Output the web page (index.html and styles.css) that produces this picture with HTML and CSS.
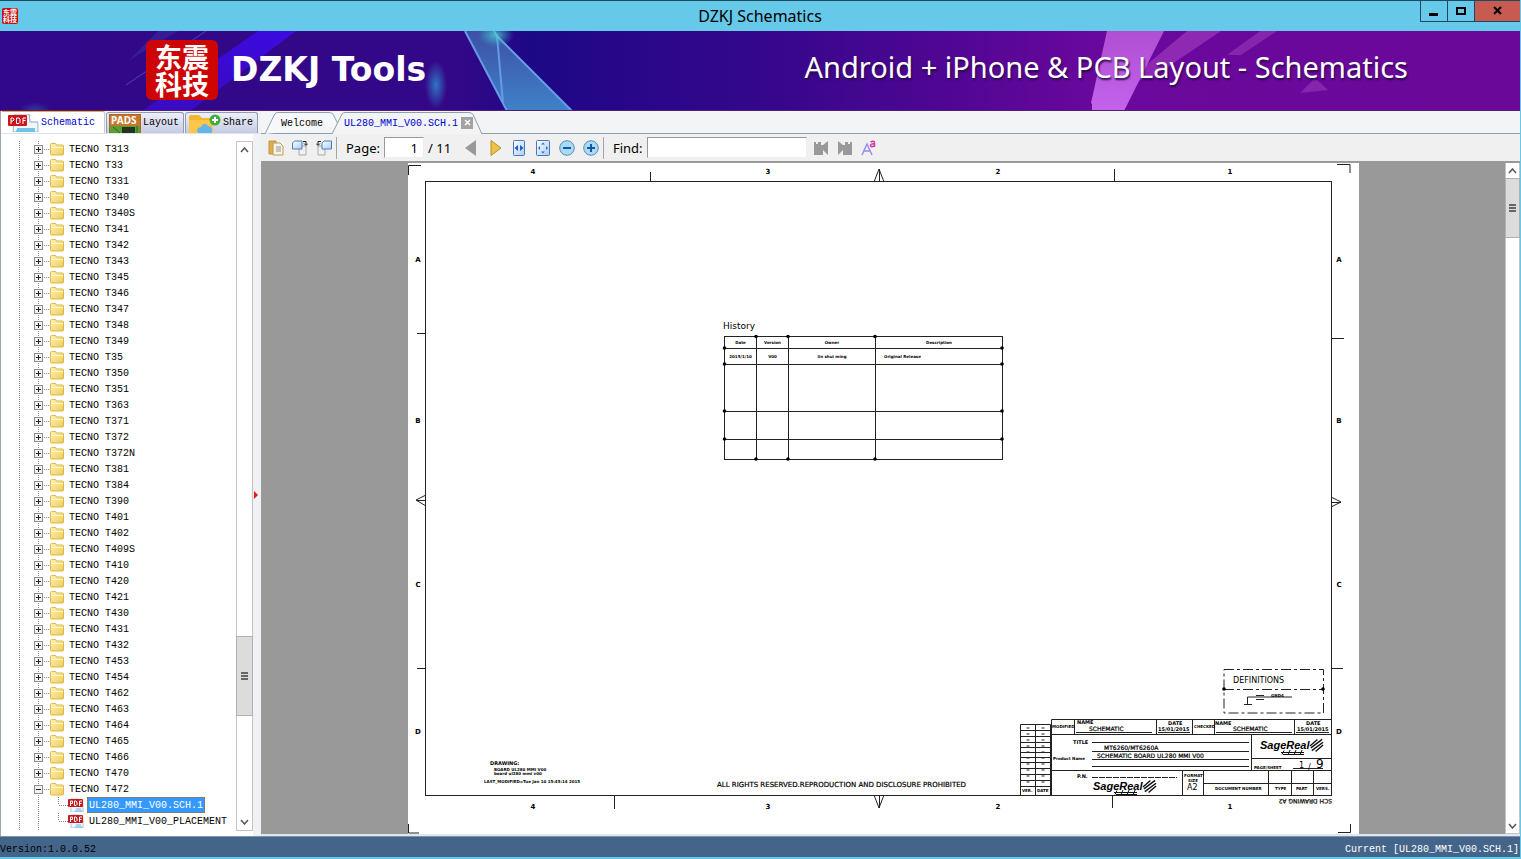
FILE: index.html
```html
<!DOCTYPE html>
<html lang="en">
<head>
<meta charset="utf-8">
<title>DZKJ Schematics</title>
<link rel="stylesheet" href="styles.css">
</head>
<body>
<svg class="defs" aria-hidden="true">
  <defs>
    <linearGradient id="gold" x1="0" y1="0" x2="1" y2="1"><stop offset="0" stop-color="#fff3b4"/><stop offset="1" stop-color="#f0cb5c"/></linearGradient>
    <linearGradient id="page-fill" x1="0" y1="0" x2="1" y2="1"><stop offset="0" stop-color="#fff"/><stop offset="1" stop-color="#a9cdf3"/></linearGradient>
    <symbol id="folder" viewBox="0 0 14 13"><path d="M.5 1.5q0-1 1-1h4l1 1.500h6q1 0 1 1v8q0 1-1 1h-11q-1 0-1-1z" fill="url(#gold)" stroke="#dcb84e"/><path d="M1 4.500h12" stroke="#fff6cc"/></symbol>
    <symbol id="pdf" viewBox="0 0 16 14"><path d="M3 1h8l4 4v9H3z" fill="#eef6fc" stroke="#a8c8dc"/><path d="M8 11h5M7 13h7" stroke="#69b7e0"/><rect y="1" width="15" height="8" rx="1" fill="#c9181e"/><path d="M2.500 8V3h2v2.500h-2M6.500 3v4.500H8l1-1V4L8 3zM11.500 8V3H14M11.500 5.500h2" fill="none" stroke="#fff"/></symbol>
    <symbol id="hatch" viewBox="0 0 16 15"><path d="M1 8l8-7M2 10l12-9M3 13l12-9M7 14l8-7" stroke="#111" stroke-width="1.500" fill="none"/></symbol>
  </defs>
</svg>
<div class="window">
  <header class="titlebar">
    <span class="app-icon">东震<br>科技</span>
    <h1>DZKJ Schematics</h1>
    <div class="controls">
      <button class="ctl" aria-label="Minimize"><svg width="10" height="10"><path d="M0 8.500h9" stroke="#000" stroke-width="3"/></svg></button>
      <button class="ctl" aria-label="Maximize"><svg width="10" height="10"><rect x="1" y="2" width="8" height="6" fill="none" stroke="#000" stroke-width="2"/></svg></button>
      <button class="ctl close" aria-label="Close"><svg width="10" height="10"><path d="M1 1l7 7M8 1L1 8" stroke="#000" stroke-width="2"/></svg></button>
    </div>
  </header>

  <div class="banner">
    <svg class="art" viewBox="0 0 1520 80" preserveAspectRatio="none" aria-hidden="true">
      <defs>
        <linearGradient id="sky"><stop offset="0" stop-color="#310889"/><stop offset=".3" stop-color="#330888"/><stop offset=".35" stop-color="#1d0884"/><stop offset=".4" stop-color="#260788"/><stop offset=".52" stop-color="#38078b"/><stop offset=".63" stop-color="#520694"/><stop offset=".73" stop-color="#6b089d"/><stop offset="1" stop-color="#690899"/></linearGradient>
        <linearGradient id="beam" x1="1" y1="0" x2="0" y2="1"><stop offset="0" stop-color="#3d0be0"/><stop offset=".5" stop-color="#390acd"/><stop offset="1" stop-color="#3a0cc0"/></linearGradient>
        <linearGradient id="shard" x1="0" y1="0" x2="0" y2="1"><stop offset="0" stop-color="#3d50a5"/><stop offset="1" stop-color="#3f82c9"/></linearGradient>
        <linearGradient id="pink" x1="0" y1="0" x2="0" y2="1"><stop offset="0" stop-color="#b04fd3"/><stop offset="1" stop-color="#c363ec"/></linearGradient>
        <radialGradient id="glow"><stop offset="0" stop-color="#2f80c8" stop-opacity=".9"/><stop offset="1" stop-color="#2f80c8" stop-opacity="0"/></radialGradient>
        <radialGradient id="spark"><stop offset="0" stop-color="#4fd6d8" stop-opacity=".8"/><stop offset="1" stop-color="#37b9c8" stop-opacity="0"/></radialGradient>
      </defs>
      <rect width="1520" height="80" fill="url(#sky)"/>
      <path d="M258 0h38L190 80h-48z" fill="url(#beam)"/>
      <path d="M158 0h20l-50 30z" fill="#3a2a9c" opacity=".6"/>
      <path d="M206 0L126 54" stroke="#5e55cc" opacity=".7"/>
      <ellipse cx="35" cy="80" rx="16" ry="9" fill="url(#glow)" opacity=".5"/>
      <ellipse cx="436" cy="54" rx="11" ry="24" fill="url(#glow)"/>
      <path d="M465 0h29l3 5 75 75h-65z" fill="url(#shard)"/>
      <path d="M465 0l42 80M494 0l3 5 6 67M497 5l75 75" stroke="#679ae8" stroke-width="2" fill="none"/>
      <ellipse cx="496" cy="4" rx="18" ry="12" fill="url(#spark)"/>
      <path d="M1187 0h34l-65 44-36 12z" fill="#9632b8" opacity=".8"/>
      <path d="M1260 0h17l-36 24h-14z" fill="#8524ad"/>
      <path d="M1107 0h57l-40 80h-32v-7l-1-1z" fill="url(#pink)"/>
      <path d="M1315 47l13 12-28 3z" fill="#8524ad"/>
      <path d="M0 79.500h1520" stroke="#502070"/>
    </svg>
    <div class="brand"><span class="seal" lang="zh"><span>东震</span><span>科技</span></span><strong>DZKJ Tools</strong></div>
    <p class="slogan">Android + iPhone &amp; PCB Layout - Schematics</p>
  </div>

  <main class="work">
    <aside class="side">
      <div class="side-tabs" role="tablist">
        <button class="side-tab on" role="tab"><svg width="31" height="18" viewBox="0 0 31 18"><path d="M7 0h14l9 9v9H5z" fill="#f1f6fa" stroke="#98b5ca"/><path d="M21 0l1 8h8" fill="#fff" stroke="#86abc5"/><path d="M9 15h18M8 17h19" stroke="#71c1e8" stroke-width="2"/><rect y="1" width="19" height="11" rx="1" fill="#cc161b"/><path d="M3 10V4h2l1 1v1L5 7H3M8.500 4v5.500H11l1-1V5l-1-1zM15 10V4h3M15 6.500h2.500" fill="none" stroke="#fff"/></svg>Schematic</button>
        <button class="side-tab" role="tab"><svg width="32" height="19" viewBox="0 0 32 19"><rect width="32" height="19" fill="#c9762a" stroke="#8a5c20"/><rect x="1" y="12" width="30" height="7" fill="#5b9e35"/><rect x="13" y="13" width="13" height="6" fill="#22351e"/><path d="M4 13l7 6M28 12v7" stroke="#2f6e22"/><text x="2" y="10" class="pads">PADS</text></svg>Layout</button>
        <button class="side-tab" role="tab"><svg width="33" height="19" viewBox="0 0 33 19"><path d="M1 3q0-2 2-2h8l3 3h11v15H1z" fill="#f3b52d"/><path d="M1 6h24v13H1z" fill="#fdc649"/><path d="M10 19q-3-5 3-6 3-6 7-1 5 0 4 7z" fill="#63b5ee"/><circle cx="27" cy="6" r="5.500" fill="#3fae3d"/><path d="M27 3v6M24 6h6" stroke="#fff" stroke-width="2"/></svg>Share</button>
      </div>
      <div class="side-body">
        <ul class="tree" id="tree"></ul>
        <div class="scroll">
          <button class="arrow" aria-label="Scroll up"><svg width="9" height="6"><path d="M1 5l3.500-4L8 5" fill="none" stroke="#555" stroke-width="1.500"/></svg></button>
          <div class="track"><i class="before"></i><i class="thumb"></i><i class="after"></i></div>
          <button class="arrow" aria-label="Scroll down"><svg width="9" height="6"><path d="M1 1l3.500 4L8 1" fill="none" stroke="#555" stroke-width="1.500"/></svg></button>
        </div>
        <div class="splitter"></div>
      </div>
    </aside>

    <section class="docs">
      <div class="doc-tabs" role="tablist">
        <button class="doc-tab" role="tab"><svg viewBox="0 0 76 22" preserveAspectRatio="none"><path d="M0 22L10 2q1-1.500 3-1.500H66q3 0 4 2L76 14" fill="#f7f8fa" stroke="#8ba0ae"/></svg><span>Welcome</span></button>
        <button class="doc-tab on" role="tab"><svg viewBox="0 0 150 22" preserveAspectRatio="none"><path d="M0 22L10 2q1-1.500 3-1.500H137q3 0 4 2L150 22" fill="#f2f4f6" stroke="#8ba0ae"/></svg><span>UL280_MMI_V00.SCH.1</span><i class="x"><svg width="7" height="7"><path d="M1 1l5 5M6 1L1 6" stroke="#fff" stroke-width="1.500"/></svg></i></button>
      </div>
      <div class="toolbar">
        <button class="tool" aria-label="Open"><svg viewBox="0 0 16 16"><path d="M1 1h7v13H1z" fill="#dfae4e" stroke="#c49138"/><path d="M5 3h7l3 3v9H5z" fill="#fbf4dc" stroke="#b79c5c"/><path d="M8 7h5M8 9h5M8 11h5" stroke="#8c97a8"/></svg></button>
        <button class="tool" aria-label="Rotate right"><svg viewBox="0 0 16 16"><path d="M7 6h7v9H7z" fill="#f0f0f0" stroke="#aaa"/><path d="M.5 3l2-2H10v8H.5z" fill="url(#page-fill)" stroke="#4c7dba"/><path d="M11 1.500h3V5M12 3.500l2 2 2-2" fill="none" stroke="#222"/></svg></button>
        <button class="tool" aria-label="Rotate left"><svg viewBox="0 0 16 16"><path d="M2 6h7v9H2z" fill="#f0f0f0" stroke="#aaa"/><path d="M6 3l2-2h7.500v8H6z" fill="url(#page-fill)" stroke="#4c7dba"/><path d="M5 1.500H2V5M0 3.500l2 2 2-2" fill="none" stroke="#222"/></svg></button>
        <i class="sep"></i>
        <label for="page">Page:</label><input id="page" class="page-no" value="1"><span class="total">/ 11</span>
        <button class="tool" aria-label="Previous page"><svg viewBox="0 0 16 16"><path d="M13 0v16L2 8z" fill="#999"/></svg></button>
        <button class="tool" aria-label="Next page"><svg viewBox="0 0 16 16"><path d="M4 .5v15L14 8z" fill="#edc347" stroke="#b98e2a"/></svg></button>
        <button class="tool" aria-label="Fit width"><svg viewBox="0 0 16 16"><rect x="2.500" y=".5" width="11" height="15" rx="1" fill="url(#page-fill)" stroke="#4477bd"/><path d="M7 5v6L3.500 8zM9 5v6l3.500-3z" fill="#1f5fb5"/></svg></button>
        <button class="tool" aria-label="Fit page"><svg viewBox="0 0 16 16"><rect x="1.500" y=".5" width="13" height="15" rx="1" fill="url(#page-fill)" stroke="#4477bd"/><path d="M6 4.500l2-2 2 2zM6 11.500l2 2 2-2zM5 6L3 8l2 2zM11 6l2 2-2 2z" fill="#2f6dbd"/></svg></button>
        <button class="tool" aria-label="Zoom out"><svg viewBox="0 0 16 16"><circle cx="8" cy="8" r="7.300" fill="#a7dbf8" stroke="#5a8caf"/><path d="M4 8h8" stroke="#1359a0" stroke-width="2"/></svg></button>
        <button class="tool" aria-label="Zoom in"><svg viewBox="0 0 16 16"><circle cx="8" cy="8" r="7.300" fill="#a7dbf8" stroke="#5a8caf"/><path d="M4 8h8M8 4v8" stroke="#1359a0" stroke-width="2"/></svg></button>
        <i class="sep"></i>
        <label for="find">Find:</label><input id="find" class="find">
        <button class="tool" aria-label="Find previous"><svg viewBox="0 0 16 16"><path d="M1 2h2v2h2V2h3v3h2l5-4v14l-5-5v5H1z" fill="#999"/></svg></button>
        <button class="tool" aria-label="Find next"><svg viewBox="0 0 16 16"><path d="M15 2h-2v2h-2V2H8v3H6L1 1v14l5-5v5h9z" fill="#999"/></svg></button>
        <button class="tool" aria-label="Match case"><svg viewBox="0 0 16 16"><path d="M1 15L6 4l5 11M3 11h6" fill="none" stroke="#9b8bea" stroke-width="1.500"/><path d="M9.500 2q4-2 4 1v4M13.500 4q-4-.5-4 1.500t4 .5" fill="none" stroke="#cf3fa5" stroke-width="1.600"/></svg></button>
      </div>
      <div class="viewer">
        <div class="canvas">
          <svg class="sheet" viewBox="408 163 951 671" role="img" aria-label="UL280 MMI V00 schematic, page 1">
            <g class="ln">
              <rect x="425.500" y="181.500" width="906" height="614"/>
              <path d="M421 165.500H408.500V175M1337 164.500h13V173M408.500 824v9H419M1338 832.500h12.500V824"/>
              <path d="M650.500 172v10M1114.500 169v13M417 333.500h8M1331 338.500h13M417 668.500h8M1331 668.500h12M614.500 795v14M1112.500 795v13"/>
              <path d="M874 182l5-13 5 13M879.500 169v13M874 795l5 13 5-13M879.500 795v13M426 495l-10 5 10 6M416 500.500h10M1331 497l10 5-10 5M1331 502.500h10"/>
            </g>
            <g class="zone">
              <text x="533" y="174">4</text><text x="768" y="174">3</text><text x="998" y="174">2</text><text x="1230" y="174">1</text>
              <text x="533" y="809">4</text><text x="768" y="809">3</text><text x="998" y="809">2</text><text x="1230" y="809">1</text>
              <text x="418" y="262">A</text><text x="418" y="423">B</text><text x="418" y="587">C</text><text x="418" y="734">D</text>
              <text x="1339" y="262">A</text><text x="1339" y="423">B</text><text x="1339" y="587">C</text><text x="1339" y="734">D</text>
            </g>
            <text class="t9" x="723" y="329">History</text>
            <foreignObject x="724" y="336" width="279" height="124">
              <table class="history">
                <colgroup><col class="c1"><col class="c1"><col class="c2"><col></colgroup>
                <tr class="r1"><th>Date</th><th>Version</th><th>Owner</th><th>Description</th></tr>
                <tr class="r2"><td>2015/1/10</td><td>V00</td><td>lin shui ming</td><td class="l">Original Release</td></tr>
                <tr class="r3"><td></td><td></td><td></td><td></td></tr>
                <tr class="r4"><td></td><td></td><td></td><td></td></tr>
                <tr class="r5"><td></td><td></td><td></td><td></td></tr>
              </table>
            </foreignObject>
            <g id="dots"></g>
            <text class="t5" x="490" y="765">DRAWING:</text>
            <g class="t4">
              <text x="494" y="771">BOARD UL280 MMI V00</text><text x="494" y="775">board ul280 mmi v00</text><text x="484" y="783">LAST_MODIFIED=Tue Jan 10 15:45:14 2015</text>
            </g>
            <text class="t7" x="717" y="787">ALL RIGHTS RESERVED.REPRODUCTION AND DISCLOSURE PROHIBITED</text>
            <g class="ln">
              <path class="dash" d="M1224 669.500h99.500V713H1224zM1224 689.500h99"/>
              <path d="M1244 704.500h8M1247.500 704.500v-7.500H1292M1256 695.500h8M1256 699.500h8"/>
            </g>
            <circle cx="1224" cy="689" r="1.800"/><circle cx="1323" cy="689" r="1.800"/>
            <text class="t8" x="1233" y="683">DEFINITIONS</text><text class="t4" x="1271" y="697">GND4</text>
            <g class="ln">
              <path d="M1020.500 724.500h30V795.500h-30zM1035.500 724v71M1020 730.500h30M1020 736.500h30M1020 742.500h30M1020 747.500h30M1020 752.500h30M1020 757.500h30M1020 762.500h30M1020 768.500h30M1020 774.500h30M1020 780.500h30M1020 786.500h30"/>
              <path d="M1051.500 795V719.500h280M1051 734.500h280M1051 770.500h280M1074.500 719v15M1156.500 719v15M1192.500 719v15M1214.500 719v15M1294.500 719v15M1251.500 734v36M1251 758.500h80M1182.500 770v25M1203.500 770v25M1268.500 770v25M1291.500 770v25M1313.500 770v25M1203 783.500h128"/>
              <path d="M1076 732.500h76M1158 732.500h32M1216 732.500h76M1296 732.500h33M1092 742.500h157M1092 751.500h157M1092 759.500h157M1092 766.500h157M1293 768.500h30"/>
              <path d="M1092 777.500h85" stroke-dasharray="6 1"/>
              <path class="marks" d="M1028 727.500v60M1043 727.500v60"/>
            </g>
            <g class="t5">
              <text x="1077" y="724">NAME</text><text x="1168" y="725">DATE</text><text x="1215" y="725">NAME</text><text x="1306" y="725">DATE</text>
              <text x="1158" y="731">15/01/2015</text><text x="1297" y="731">15/01/2015</text>
              <text x="1073" y="744">TITLE</text><text x="1077" y="778">P.N.</text>
            </g>
            <g class="t4">
              <text x="1053" y="760">Product Name</text><text x="1184" y="777">FORMAT</text><text x="1188" y="782">SIZE</text><text x="1254" y="769">PAGE/SHEET</text><text x="1215" y="790">DOCUMENT NUMBER</text>
              <text x="1052" y="728">MODIFIED</text><text x="1194" y="728">CHECKED</text><text x="1275" y="790">TYPE</text><text x="1296" y="790">PART</text><text x="1316" y="790">VERS.</text><text x="1022" y="792">VER.</text><text x="1037" y="792">DATE</text>
            </g>
            <g class="t6">
              <text x="1089" y="731">SCHEMATIC</text><text x="1233" y="731">SCHEMATIC</text><text x="1104" y="750">MT6260/MT6260A</text><text x="1097" y="758">SCHEMATIC BOARD UL280 MMI V00</text>
              <text transform="rotate(180 1309 801)" x="1286" y="803">SCH DRAWING A2</text>
            </g>
            <text class="t8" x="1187" y="790">A2</text><text class="t8" x="1299" y="768">1</text><text class="t8" x="1308" y="770">/</text><text class="t12" x="1316" y="768">9</text>
            <g class="sage"><text x="1260" y="749">SageReal</text><text x="1093" y="790">SageReal</text></g>
            <use href="#hatch" x="1309" y="738" width="15" height="15"/><use href="#hatch" x="1142" y="779" width="15" height="15"/>
            <path class="sub" d="M1282 754.500l2-4M1281 752.500h23M1283 754.500h21M1288 755l2-5M1294 755l2-5M1300 755l2-5M1115 794.500l2-4M1114 792.500h23M1116 794.500h21M1121 795l2-5M1127 795l2-5M1133 795l2-5"/>
          </svg>
        </div>
        <div class="scroll doc-scroll">
          <button class="arrow" aria-label="Scroll up"><svg width="9" height="6"><path d="M1 5l3.500-4L8 5" fill="none" stroke="#555" stroke-width="1.500"/></svg></button>
          <div class="track"><i class="thumb"></i><i class="after"></i></div>
          <button class="arrow" aria-label="Scroll down"><svg width="9" height="6"><path d="M1 1l3.500 4L8 1" fill="none" stroke="#555" stroke-width="1.500"/></svg></button>
        </div>
      </div>
    </section>
  </main>
  <footer class="status"><span>Version:1.0.0.52</span><span class="current">Current [UL280_MMI_V00.SCH.1]</span></footer>
</div>
<script src="script.js"></script>
</body>
</html>
```
FILE: styles.css
```css
* { box-sizing: border-box; }
html, body { height: 100%; }
body { margin: 0; overflow: hidden; font-family: "Liberation Mono", monospace; font-size: 10px; color: #000; }
button { margin: 0; padding: 0; border: 0; background: none; font: inherit; color: inherit; }
h1, p, ul { margin: 0; padding: 0; font-weight: 400; }
ul { list-style: none; }
i { display: block; }
svg { display: block; flex: none; }
.defs { position: absolute; width: 0; height: 0; }

.window { display: flex; flex-direction: column; height: 100vh; border-right: 1px solid #66c9ea; border-bottom: 2px solid #66c9ea; background: #f0f2f5; }

.titlebar { display: grid; grid-template-columns: 100px 1fr 100px; flex: none; height: 31px; border-top: 1px solid #1d4a63; background: #66c9ea; }
.app-icon { align-self: center; width: 16px; height: 16px; margin-left: 2px; border-radius: 2px; background: #c90a0a; color: #fff; font: 700 7px/7px "Noto Sans CJK SC", sans-serif; padding-top: 1px; text-align: center; }
.titlebar h1 { align-self: center; text-align: center; font: 16px/20px "Noto Sans", sans-serif; }
.controls { display: flex; justify-self: end; height: 21px; border: 1px solid #22465a; border-width: 0 0 1px 1px; }
.ctl { display: grid; place-items: center; width: 27px; border-right: 1px solid #22465a; }
.close { width: 45px; border-right: 0; background: #c75b52; }

.banner { position: relative; display: flex; align-items: center; justify-content: space-between; flex: none; height: 80px; padding: 0 112px 0 146px; color: #fff; }
.art { position: absolute; inset: 0; width: 100%; height: 100%; }
.brand { position: relative; display: flex; align-items: center; gap: 13px; padding-bottom: 2px; }
.brand strong { font: 700 33px/40px "DejaVu Sans", sans-serif; }
.seal { display: grid; place-content: center; grid-auto-rows: 27px; width: 72px; height: 60px; border-radius: 6px; background: #cd0505; font: 700 27px/27px "Noto Sans CJK SC", sans-serif; }
.slogan { position: relative; padding-bottom: 8px; font: 29px/36px "Noto Sans", sans-serif; text-shadow: 1px 2px 2px #2a0a4a; white-space: nowrap; }

.work { display: flex; flex: 1; min-height: 0; }
.side { display: flex; flex-direction: column; flex: none; width: 261px; border-left: 1px solid #9aa8b4; background: #fff; }
.side-tabs { display: flex; align-items: flex-end; flex: none; height: 23px; gap: 1px; background: #f0f2f5; border-bottom: 1px solid #dfe3e8; }
.side-tab { display: flex; align-items: center; gap: 2px; height: 21px; padding: 0 4px 0 2px; border: 1px solid #8f9cb4; border-bottom: 0; border-radius: 3px 3px 0 0; background: linear-gradient(#eef0f8, #c5cbe2); line-height: 16px; }
.side-tab.on { height: 23px; width: 104px; padding-left: 6px; border-color: #f0a93c #c5ccd4 #fff #fff; border-top-width: 2px; background: #fff; color: #0000d0; }
.pads { font: 700 10px "Noto Sans", sans-serif; fill: #fff; }
.side-body { display: flex; flex: 1; min-height: 0; }
.tree { flex: 1; min-width: 0; margin: 7px 0 5px; overflow: hidden; background: repeating-linear-gradient(#888 0 1px, #fff 1px 2px) 18px 0 / 1px 100% no-repeat, repeating-linear-gradient(#888 0 1px, #fff 1px 2px) 37px 0 / 1px 100% no-repeat; }
.node { display: flex; align-items: center; height: 16px; padding-left: 33px; white-space: nowrap; }
.toggle { position: relative; width: 9px; height: 9px; border: 1px solid #8c8c8c; background: #f2f2f2; }
.toggle::before, .toggle.plus::after { content: ""; position: absolute; left: 1px; top: 3px; width: 5px; height: 1px; background: #222; }
.toggle.plus::after { left: 3px; top: 1px; width: 1px; height: 5px; }
.twig { width: 7px; height: 1px; background: repeating-linear-gradient(90deg, #fff 0 1px, #888 1px 2px); }
.node svg { width: 14px; height: 13px; }
.node span { padding: 1px 2px 0; margin-left: 3px; line-height: 15px; }
.leaf { padding-left: 57px; background: repeating-linear-gradient(#888 0 1px, #fff 1px 2px) 57px 0 / 1px 9px no-repeat; }
.leaf .twig { width: 10px; }
.leaf svg { width: 16px; height: 14px; }
.leaf.picked span { background: #3399ff; color: #fff; outline: 1px dotted #b06a1c; outline-offset: -1px; }
.scroll { display: flex; flex-direction: column; width: 17px; margin: 7px 0 5px; border: 1px solid #c4c4c4; background: #fff; }
.arrow { display: grid; place-items: center; height: 16px; }
.track { display: flex; flex-direction: column; flex: 1; margin: 0 -1px; }
.thumb { flex: 79; border: 1px solid #b0b0b0; background: linear-gradient(#666 0 2px, #ddd 2px 3px, #666 3px 5px, #ddd 5px 6px, #666 6px 8px) center / 7px 8px no-repeat #dcdcdc; }
.before { flex: 480; }
.after { flex: 98; }
.splitter { display: grid; align-items: center; width: 8px; padding-top: 20px; background: #eff1f4; }
.splitter::before { content: ""; border: solid transparent; border-width: 4px 0 4px 4px; border-left-color: #e01b1b; margin-left: 1px; width: 0; }

.docs { display: flex; flex-direction: column; flex: 1; min-width: 0; }
.doc-tabs { display: flex; align-items: flex-end; flex: none; height: 23px; padding-left: 4px; border-bottom: 1px solid #8ba0ae; background: #f2f4f6; line-height: 16px; }
.doc-tab { position: relative; display: flex; align-items: center; justify-content: center; width: 74px; height: 21px; }
.doc-tab > svg { position: absolute; left: 0; top: 0; width: 100%; height: 22px; }
.doc-tab span, .doc-tab .x { position: relative; }
.doc-tab span { padding-top: 2px; }
.doc-tab.on { justify-content: flex-start; width: 150px; padding-left: 12px; gap: 3px; margin-left: -7px; color: #0000d0; }
.x { display: grid; place-items: center; width: 12px; height: 12px; background: #a3a3a3; }
.toolbar { display: flex; align-items: center; gap: 8px; flex: none; height: 28px; padding-left: 7px; background: #f0f0f0; border-bottom: 1px solid #999; font: 13px/18px "Noto Sans", sans-serif; }
.tool, .tool svg { width: 16px; height: 16px; flex: none; }
.sep { width: 1px; height: 22px; margin: 0 1px 0 -4px; background: #a5a5a5; }
.toolbar input { height: 21px; padding: 0 5px; border: 1px solid #999; border-color: #999 #eee #eee #999; border-radius: 0; background: #fff; font: inherit; }
.page-no { width: 40px; margin-left: -4px; text-align: right; }
.total { width: 25px; margin: 0 2px 0 -4px; white-space: nowrap; }
.find { width: 160px; margin: 0 -2px 0 -4px; }
.viewer { display: flex; flex: 1; min-height: 0; border-top: 1px solid #999; border-bottom: 2px solid #dfe8f0; background: #999; }
.canvas { display: flex; justify-content: center; flex: 1; min-width: 0; }
.sheet { height: 100%; aspect-ratio: 951 / 671; background: #fff; }
.doc-scroll { width: 15px; margin: 0; border-top: 0; }
.doc-scroll .arrow { height: 15px; }
.doc-scroll .thumb { flex: 58; }
.doc-scroll .after { flex: 585; }

.ln { fill: none; stroke: #222; stroke-width: 1; }
.dash { stroke-dasharray: 10 3 3 3; }
.marks { stroke-width: 3; stroke-dasharray: 1 5; }
.sub { fill: none; stroke: #111; stroke-width: 1; }
.zone { font: 700 7px "DejaVu Sans", sans-serif; text-anchor: middle; }
.t4 { font: 700 4px "DejaVu Sans", sans-serif; }
.t5 { font: 700 5px "DejaVu Sans", sans-serif; }
.t6 { font: 6px "DejaVu Sans", sans-serif; stroke: #000; stroke-width: .2px; }
.t7 { font: 7px "DejaVu Sans", sans-serif; stroke: #000; stroke-width: .2px; }
.t8 { font: 8px "DejaVu Sans", sans-serif; }
.t9 { font: 9px "DejaVu Sans", sans-serif; }
.t12 { font: 12px "DejaVu Sans", sans-serif; }
.sage { font: italic 700 11px "Liberation Sans", sans-serif; }
.history { width: 279px; height: 124px; table-layout: fixed; border-collapse: collapse; font: 700 4px/5px "DejaVu Sans", sans-serif; text-align: center; }
.history th, .history td { padding: 0; border: 1px solid #222; }
.history .l { text-align: left; padding-left: 8px; }
.c1 { width: 32px; }
.c2 { width: 87px; }
.r1 { height: 12px; }
.r2 { height: 16px; }
.r3 { height: 47px; }
.r4 { height: 28px; }
.r5 { height: 20px; }

.status { display: flex; align-items: center; justify-content: space-between; flex: none; height: 21px; padding: 4px 1px 0 0; background: #44658a; border-top: 1px solid #7f93a8; }
.current { color: #fff; }
```
FILE: script.js
```js
const models = 'T313 T33 T331 T340 T340S T341 T342 T343 T345 T346 T347 T348 T349 T35 T350 T351 T363 T371 T372 T372N T381 T384 T390 T401 T402 T409S T410 T420 T421 T430 T431 T432 T453 T454 T462 T463 T464 T465 T466 T470 T472'.split(' ');
const icon = name => `<svg><use href="#${name}"/></svg>`;
const folder = (label, open) => `<li class="node"><button class="toggle ${open ? '' : 'plus'}" aria-label="Toggle"></button><i class="twig"></i>${icon('folder')}<span>${label}</span></li>`;
const leaf = (label, picked) => `<li class="node leaf ${picked ? 'picked' : ''}"><i class="twig"></i>${icon('pdf')}<span>${label}</span></li>`;
document.getElementById('tree').innerHTML =
  models.map(m => folder('TECNO ' + m, m === 'T472')).join('') +
  leaf('UL280_MMI_V00.SCH.1', true) + leaf('UL280_MMI_V00_PLACEMENT', false) + folder('', false);

const joints = [];
for (const y of [348, 364, 411, 439]) joints.push([724.5, y], [1002, y]);
for (const x of [756, 788, 875]) joints.push([x, 336.5], [x, 459]);
document.getElementById('dots').innerHTML = joints.map(([x, y]) => `<circle cx="${x}" cy="${y}" r="1.8"/>`).join('');
```
